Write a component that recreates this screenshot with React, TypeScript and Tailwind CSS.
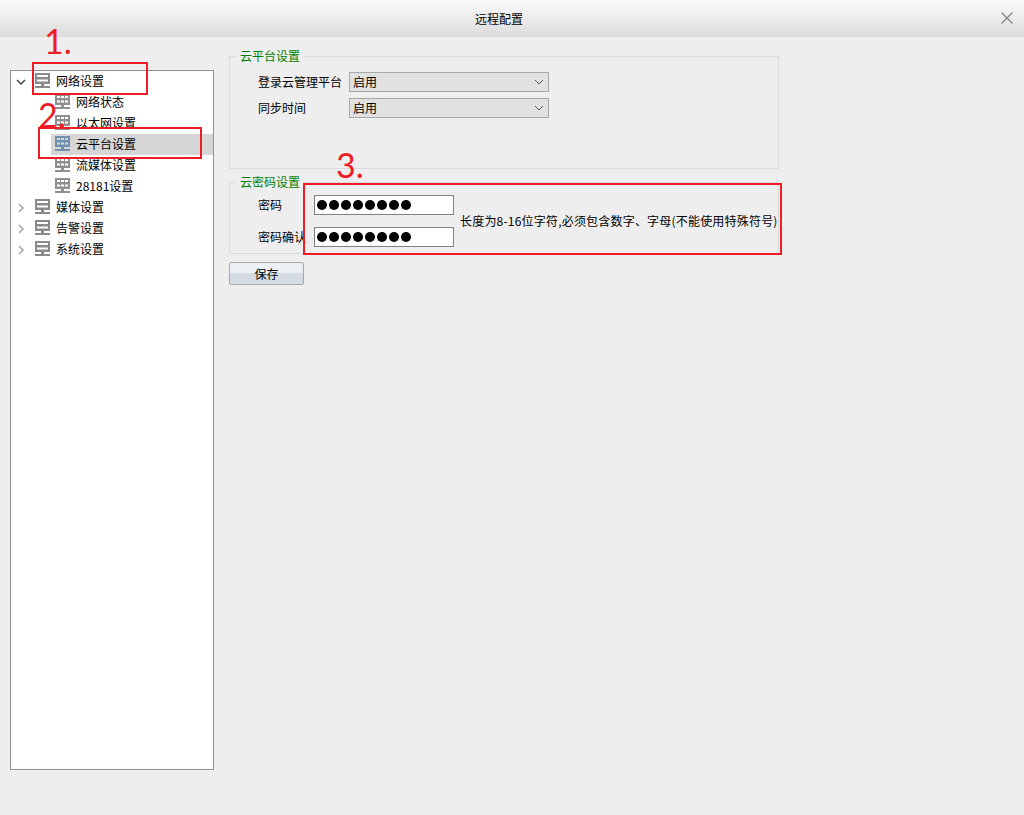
import React from "react";

const font = { fontFamily: '"Noto Sans CJK SC", "Liberation Sans", sans-serif' };

const ParentIcon = () => (
  <svg width="15" height="17" viewBox="0 0 15 17" className="shrink-0" fill="#8a8a8a">
    <path d="M0 0h15v11H0zM2 2v2h11V2zM2 6.500v2h11v-2z" fillRule="evenodd" />
    <rect x="6" y="11" width="3" height="3" />
    <rect x="0" y="13" width="15" height="2" />
  </svg>
);

const ChildIcon = ({ color = "#8f8f8f" }: { color?: string }) => (
  <svg width="15" height="17" viewBox="0 0 15 17" className="shrink-0" fill={color}>
    <path
      d="M0 0h15v11H0zM2 2v2h3V2zM6 2v2h3V2zM10 2v2h3V2zM2 6.500v2h3v-2zM6 6.500v2h3v-2zM10 6.500v2h3v-2z"
      fillRule="evenodd"
    />
    <rect x="6" y="11" width="3" height="3" />
    <rect x="0" y="13" width="15" height="2" />
  </svg>
);

const Arrow = ({ open }: { open?: boolean }) => (
  <svg width="10" height="10" viewBox="0 0 10 10" className="shrink-0" fill="none">
    {open ? (
      <path d="M1 3l4 4 4-4" stroke="#444444" strokeWidth="1.500" />
    ) : (
      <path d="M3 1l4 4-4 4" stroke="#a6a6a6" strokeWidth="1.500" />
    )}
  </svg>
);

const ParentRow = ({ label, open }: { label: string; open?: boolean }) => (
  <div className="flex h-[21px] items-center pl-[5px]">
    <Arrow open={open} />
    <div className="ml-[9px] flex items-center">
      <ParentIcon />
    </div>
    <span className="mb-[2px] ml-[6px] text-[12px] text-black">{label}</span>
  </div>
);

const ChildRow = ({ label, selected }: { label: string; selected?: boolean }) => (
  <div className={`ml-[40px] flex h-[21px] items-center pl-[4px] ${selected ? "bg-[#d6d6d6]" : ""}`}>
    <ChildIcon color={selected ? "#6f8fae" : "#8f8f8f"} />
    <span className="mb-[2px] ml-[6px] text-[12px] text-black">{label}</span>
  </div>
);

const Select = () => (
  <div className="flex h-[20px] w-[200px] items-center justify-between border border-[#a8a8a8] bg-[#e1e1e1] pl-[3px] pr-[4px] text-[12px] text-black">
    <span>启用</span>
    <svg width="10" height="6" viewBox="0 0 10 6" fill="none">
      <path d="M1 1l4 4 4-4" stroke="#555555" strokeWidth="1" />
    </svg>
  </div>
);

const PasswordInput = () => (
  <div className="flex h-[20px] w-[140px] items-center gap-[2px] border border-[#808080] bg-white pl-[2px]">
    {[0, 1, 2, 3, 4, 5, 6, 7].map((i) => (
      <span key={i} className="h-[10px] w-[10px] rounded-full bg-black" />
    ))}
  </div>
);

const App = () => {
  return (
    <div className="relative flex h-[815px] w-[1024px] flex-col overflow-hidden bg-[#eeeeee]" style={font}>
      <div className="relative flex h-[37px] shrink-0 items-center justify-center bg-gradient-to-b from-[#fbfbfb] to-[#dcdcdc] pr-[26px] text-[12px] text-black">
        <span>远程配置</span>
        <svg width="14" height="14" viewBox="0 0 14 14" className="absolute right-[10px] top-[11px]" fill="none">
          <path d="M1.500 1.500l11 11M12.500 1.500l-11 11" stroke="#7d7d7d" strokeWidth="1.100" />
        </svg>
      </div>

      <div className="flex flex-1 pl-[10px] pt-[12px]">
        <div className="mt-[21px] h-[700px] w-[204px] shrink-0 border border-[#8f8f9a] bg-white">
          <ParentRow label="网络设置" open />
          <ChildRow label="网络状态" />
          <ChildRow label="以太网设置" />
          <ChildRow label="云平台设置" selected />
          <ChildRow label="流媒体设置" />
          <ChildRow label="28181设置" />
          <ParentRow label="媒体设置" />
          <ParentRow label="告警设置" />
          <ParentRow label="系统设置" />
        </div>

        <div className="ml-[15px] w-[550px]">
          <fieldset className="h-[120px] border border-[#dcdcdc]">
            <legend className="ml-[7px] px-[3px] text-[12px] leading-[14px] text-[#008000]">云平台设置</legend>
            <div className="mt-[9px] flex h-[20px] items-center pl-[28px]">
              <span className="w-[91px] text-[12px] text-black">登录云管理平台</span>
              <Select />
            </div>
            <div className="mt-[6px] flex h-[20px] items-center pl-[28px]">
              <span className="w-[91px] text-[12px] text-black">同步时间</span>
              <Select />
            </div>
          </fieldset>

          <fieldset className="mt-[6px] h-[79px] border border-[#dcdcdc]">
            <legend className="ml-[7px] px-[3px] text-[12px] leading-[14px] text-[#008000]">云密码设置</legend>
            <div className="mt-[6px] flex h-[20px] items-center pl-[28px]">
              <span className="w-[56px] text-[12px] text-black">密码</span>
              <PasswordInput />
            </div>
            <div className="mt-[12px] flex h-[20px] items-center pl-[28px]">
              <span className="w-[56px] overflow-hidden whitespace-nowrap text-[12px] text-black">密码确认</span>
              <PasswordInput />
            </div>
          </fieldset>

          <button className="mt-[8px] h-[23px] w-[75px] rounded-[2px] border border-[#a9a9a9] bg-[linear-gradient(#edf0f4_50%,#d5dbe3_50%)] text-[12px] text-black">
            保存
          </button>
        </div>
      </div>

      <span className="absolute left-[460px] top-[213px] whitespace-nowrap text-[12px] leading-[16px] tracking-[0.2px] text-black">
        长度为8-16位字符,必须包含数字、字母(不能使用特殊符号)
      </span>

      {/* red annotations drawn over the screenshot */}
      <span className="absolute left-[44px] top-[18px] font-['Lato'] text-[34px] font-normal leading-[46px] text-[#ee1c25]">1.</span>
      <span className="absolute left-[38px] top-[92px] font-['Lato'] text-[34px] font-normal leading-[46px] text-[#ee1c25]">2.</span>
      <span className="absolute left-[336px] top-[142px] font-['Lato'] text-[34px] font-normal leading-[46px] text-[#ee1c25]">3.</span>
      <div className="absolute left-[32px] top-[62px] h-[33px] w-[116px] border-2 border-[#ee1c25]" />
      <div className="absolute left-[38px] top-[127px] h-[32px] w-[164px] border-2 border-[#ee1c25]" />
      <div className="absolute left-[303px] top-[183px] h-[72px] w-[479px] border-2 border-[#ee1c25]" />
    </div>
  );
};

export default App;
